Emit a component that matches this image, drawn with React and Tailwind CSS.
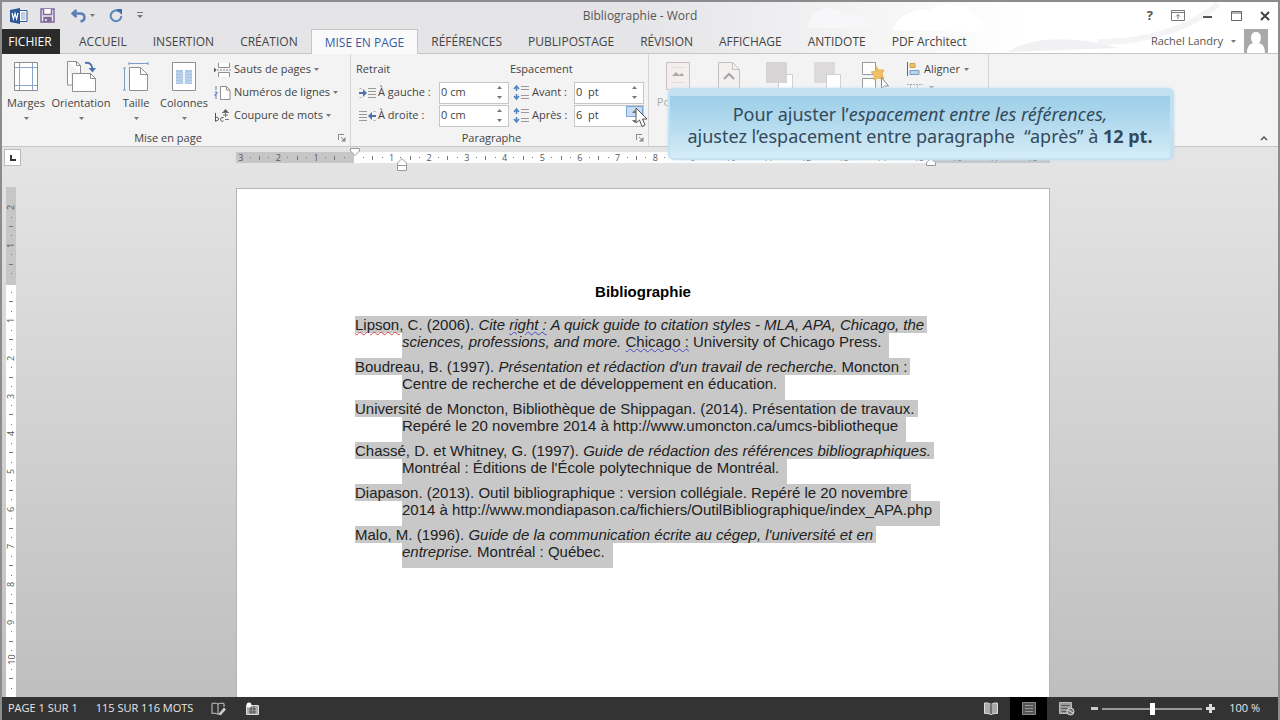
import React, { useState } from 'react';

const TABS = ['ACCUEIL', 'INSERTION', 'CRÉATION', 'MISE EN PAGE', 'RÉFÉRENCES', 'PUBLIPOSTAGE', 'RÉVISION', 'AFFICHAGE', 'ANTIDOTE', 'PDF Architect'];

// one quarter of a centimetre on the rulers
const QUARTER = 37.7 / 4;

const Caret = ({ className = '' }) => (
    <svg width="5" height="3" viewBox="0 0 5 3" className={`shrink-0 ${className}`}>
        <path d="M0 0h5L2.5 3z" fill="#777" />
    </svg>
);

const WordLogo = () => (
    <svg width="18" height="16" viewBox="0 0 18 16">
        <path d="M9 2.5h8v11H9z" fill="#fff" stroke="#2b579a" />
        <path d="M11 5h4.5M11 7h4.5M11 9h4.5M11 11h4.5" stroke="#7f9cc9" />
        <path d="M0 2l10-2v16L0 14z" fill="#2b579a" />
        <path d="M2 5l1.4 6L5 5.500l1.600 5.500L8 5" fill="none" stroke="#fff" strokeWidth="1.200" />
    </svg>
);

const SaveIcon = () => (
    <svg width="15" height="15" viewBox="0 0 15 15" fill="none" stroke="#80689a" strokeWidth="1.500">
        <path d="M1 1h13v13H1z" fill="#eeeaf4" />
        <path d="M3.500 1v5.500h8V1" fill="#fff" />
        <path d="M4 14v-4.500h7V14" fill="#80689a" />
        <path d="M6 11v2" stroke="#fff" />
    </svg>
);

const UndoIcon = () => (
    <svg width="15" height="14" viewBox="0 0 15 14" fill="none" stroke="#5b7db8" strokeWidth="2.500">
        <path d="M5.500 1L1.500 4.500l4 3.500M2 4.500h7c3 0 4.500 1.500 4.500 4S12 12 9.500 12.500" />
    </svg>
);

const RedoIcon = () => (
    <svg width="14" height="14" viewBox="0 0 14 14" fill="none" stroke="#5b86bd" strokeWidth="2">
        <path d="M10 2.500A5.300 5.300 0 1 0 12.300 7" />
        <path d="M7 0h6v6z" fill="#3f6cab" stroke="none" />
    </svg>
);

const MarginsIcon = () => (
    <svg width="24" height="29" viewBox="0 0 24 29" fill="none">
        <path d="M.5.500h23v28H.5z" fill="#fff" stroke="#8e8e8e" />
        <path d="M5.500 1v27M18.500 1v27M1 5.500h22M1 23.500h22" stroke="#8aa5c8" />
    </svg>
);

const OrientationIcon = () => (
    <svg width="31" height="31" viewBox="0 0 31 31" fill="none">
        <path d="M1.500.500h9l4 4V12M1.500.500V24H6" fill="#fff" stroke="#8e8e8e" />
        <path d="M10.500.500v4h4" stroke="#8e8e8e" />
        <path d="M6.500 12.500h18l5 5v13h-23z" fill="#fff" stroke="#8e8e8e" />
        <path d="M24.500 12.500v5h5" stroke="#8e8e8e" />
        <path d="M19 2c4-1 7 1 7.500 6" stroke="#4d73ad" strokeWidth="2" />
        <path d="M22.500 7h7.500l-3.500 4.500z" fill="#4d73ad" />
    </svg>
);

const SizeIcon = () => (
    <svg width="26" height="29" viewBox="0 0 26 29" fill="none">
        <path d="M6 1.500h19M6 0v3M25 0v3M1.500 6v22M0 6h3M0 28h3" stroke="#7d9cc6" />
        <path d="M6.500 5.500h11l7 7v16h-18z" fill="#fff" stroke="#8e8e8e" />
        <path d="M17.500 5.500v7h7" stroke="#8e8e8e" />
    </svg>
);

const ColumnsIcon = () => (
    <svg width="24" height="29" viewBox="0 0 24 29" fill="none">
        <path d="M.5.500h23v28H.5z" fill="#fff" stroke="#8e8e8e" />
        <path d="M4 8h7v14H4zM13 8h7v14h-7z" fill="#a9c6e6" />
        <path d="M4 11h16M4 14h16M4 17h16M4 20h16" stroke="#c8dcf1" />
    </svg>
);

const BreaksIcon = () => (
    <svg width="17" height="14" viewBox="0 0 17 14" fill="none" stroke="#8e8e8e">
        <path d="M4.500 0v4.500h11V0M4.500 14V9.500h11V14" fill="#fff" />
        <path d="M3 7h14" strokeDasharray="2 1" />
        <path d="M0 4.500L2.500 7 0 9.500z" fill="#555" stroke="none" />
    </svg>
);

const LineNumbersIcon = () => (
    <svg width="17" height="14" viewBox="0 0 17 14" fill="none" stroke="#8e8e8e">
        <path d="M6.500.500h6l3.500 3.500v9.500H6.500z" fill="#fff" />
        <path d="M12.500.500V4H16" />
        <path d="M2 0v4M1 6h2v2H1v2h2M1 12h2" stroke="#5b7db8" />
    </svg>
);

const HyphenIcon = () => (
    <svg width="17" height="14" viewBox="0 0 17 14" fill="none" stroke="#555">
        <path d="M1.500 4v8.500M1.500 8.500c4-1.500 4 4 0 3.500M9.500 8.500c-4-1-4 5 0 3.500" />
        <path d="M11 10.500h4M11.500 1v7M8 3.500h7M9 6h5" stroke="#777" />
        <path d="M11.500 0l2.500 3h-5z" fill="#555" stroke="none" />
    </svg>
);

const IndentIcon = ({ right }) => (
    <svg width="17" height="14" viewBox="0 0 17 14" fill="none" className={right ? '-scale-x-100' : ''}>
        <path d="M9 2.500h8M9 5.500h8M9 8.500h8M9 11.500h8" stroke="#999" />
        <path d="M0 7h7" stroke="#4d73ad" strokeWidth="2" />
        <path d="M4 3l4 4-4 4z" fill="#4d73ad" />
        <path d="M.5 2.500h2M.5 11.500h2" stroke="#aaa" />
    </svg>
);

const SpacingIcon = () => (
    <svg width="17" height="17" viewBox="0 0 17 17" fill="none">
        <path d="M8 2.500h8M8 5.500h8M8 11.500h8M8 14.500h8" stroke="#999" />
        <path d="M3.500 2v5M3.500 10v5M1 5l2.500-3L6 5M1 12l2.500 3L6 12" stroke="#4d84b8" strokeWidth="1.500" />
    </svg>
);

const Launcher = () => (
    <svg width="8" height="8" viewBox="0 0 8 8" fill="none" stroke="#888">
        <path d="M.5 6V.500H6M3 3l3 3" />
        <path d="M7.500 3v4.500H3z" fill="#888" stroke="none" />
    </svg>
);

function BigButton({ icon, label, className }) {
    return (
        <button className={`flex flex-col items-center whitespace-nowrap ${className}`}>
            <span className="flex h-9 items-center justify-center">{icon}</span>
            <span className="mt-px leading-4">{label}</span>
            <Caret className="mt-[6px]" />
        </button>
    );
}

function SmallButton({ icon, label }) {
    return (
        <button className="flex h-[23px] items-center gap-[3px] whitespace-nowrap">
            {icon}
            <span>{label}</span>
            <Caret />
        </button>
    );
}

function Spinner({ id, icon, label, value, onChange, hot, labelClass }) {
    return (
        <div className="flex h-[23px] items-center">
            <span className="mr-[2px]">{icon}</span>
            <label htmlFor={id} className={`whitespace-nowrap ${labelClass}`}>{label}</label>
            <div className="flex h-[22px] w-[70px] border border-[#c6c6c6] bg-white">
                <input
                    id={id}
                    value={value}
                    onChange={(e) => onChange(e.target.value)}
                    className="w-0 flex-1 bg-transparent pl-px whitespace-pre outline-none"
                />
                <div className="flex w-[17px] flex-col">
                    <button aria-label="Augmenter" className={`flex flex-1 items-center justify-center ${hot ? 'border border-[#7da7d6] bg-[#c5dcf3]' : ''}`}>
                        <Caret className="rotate-180" />
                    </button>
                    <button aria-label="Diminuer" className="flex flex-1 items-center justify-center">
                        <Caret />
                    </button>
                </div>
            </div>
        </div>
    );
}

function GroupLabel({ children }) {
    return (
        <div className="relative flex h-4 items-center justify-center pr-4">
            <span>{children}</span>
            <button aria-label="Options" className="absolute right-1 bottom-1">
                <Launcher />
            </button>
        </div>
    );
}

function TitleBar() {
    return (
        <div className="relative flex h-[27px] items-center justify-between pr-2 pl-2">
            <div className="flex items-center">
                <WordLogo />
                <button aria-label="Enregistrer" className="ml-3"><SaveIcon /></button>
                <button aria-label="Annuler" className="ml-4 flex items-center gap-1"><UndoIcon /><Caret /></button>
                <button aria-label="Rétablir" className="ml-[14px]"><RedoIcon /></button>
                <button aria-label="Personnaliser" className="ml-[14px]">
                    <svg width="6" height="7" viewBox="0 0 6 7"><path d="M0 0h6v1H0zM0 3h6L3 6z" fill="#777" /></svg>
                </button>
            </div>
            <h1 className="absolute left-1/2 -translate-x-1/2 text-[12px] text-[#555]">Bibliographie - Word</h1>
            <div className="flex items-center gap-[18px] text-[#555]">
                <button aria-label="Aide" className="text-[13px] font-bold">?</button>
                <button aria-label="Options d'affichage du ruban">
                    <svg width="14" height="11" viewBox="0 0 14 11" fill="none" stroke="#777">
                        <path d="M.5.500h13v10H.5zM.5 2.500h13M7 9V4.500M5 6.500l2-2 2 2" />
                    </svg>
                </button>
                <button aria-label="Réduire">
                    <svg width="10" height="11" viewBox="0 0 10 11"><path d="M0 6h9v2H0z" fill="#555" /></svg>
                </button>
                <button aria-label="Agrandir">
                    <svg width="11" height="10" viewBox="0 0 11 10" fill="none" stroke="#666"><path d="M.5.500h10v9H.5zM.5 2h10" /></svg>
                </button>
                <button aria-label="Fermer">
                    <svg width="10" height="10" viewBox="0 0 10 10" stroke="#444" strokeWidth="2"><path d="M1 1l8 8M9 1L1 9" /></svg>
                </button>
            </div>
        </div>
    );
}

function TabBar({ active, onSelect }) {
    return (
        <div className="relative flex h-[25px] items-stretch text-[12px]">
            <button className="-ml-[2px] w-[60px] bg-[#2b2b2b] text-white">FICHIER</button>
            <div className="flex flex-1 border-b border-[#c6c6c6] pl-[6px]">
                {TABS.map(tab => (
                    <button
                        key={tab}
                        onClick={() => onSelect(tab)}
                        className={`px-[13px] pt-px whitespace-nowrap ${tab === active
                            ? '-mb-px border border-b-0 border-[#c6c6c6] bg-[#fafafa] text-[#3a5ba8]'
                            : 'text-[#444]'}`}
                    >
                        {tab}
                    </button>
                ))}
                <button className="mr-[10px] ml-auto flex items-center gap-2 text-[11px] text-[#555]">
                    Rachel Landry <Caret />
                    <svg width="24" height="24" viewBox="0 0 24 24">
                        <path d="M0 0h24v24H0z" fill="#a9a9a9" />
                        <path d="M3 24c0-7 3-9 6-10-3-3-3-11 3-11s6 8 3 11c3 1 6 3 6 10z" fill="#fff" />
                    </svg>
                </button>
            </div>
        </div>
    );
}

function Ribbon() {
    const [values, setValues] = useState({ left: '0 cm', right: '0 cm', before: '0  pt', after: '6  pt' });
    const set = (key) => (value) => setValues({ ...values, [key]: value });

    return (
        <div className="flex h-[93px] border-b border-[#c6c6c6] bg-[#f3f3f3] text-[11px] text-[#444]">
            {/* Mise en page */}
            <section className="flex w-[349px] shrink-0 flex-col justify-between border-r border-[#d5d5d5] pt-1">
                <div className="flex">
                    <BigButton icon={<MarginsIcon />} label="Marges" className="w-12" />
                    <BigButton icon={<OrientationIcon />} label="Orientation" className="w-[62px]" />
                    <BigButton icon={<SizeIcon />} label="Taille" className="w-12" />
                    <BigButton icon={<ColumnsIcon />} label="Colonnes" className="w-12" />
                    <div className="ml-[6px] flex flex-col">
                        <SmallButton icon={<BreaksIcon />} label="Sauts de pages" />
                        <SmallButton icon={<LineNumbersIcon />} label="Numéros de lignes" />
                        <SmallButton icon={<HyphenIcon />} label="Coupure de mots" />
                    </div>
                </div>
                <GroupLabel>Mise en page</GroupLabel>
            </section>

            {/* Paragraphe */}
            <section className="flex w-[298px] shrink-0 flex-col justify-between border-r border-[#d5d5d5] pt-1">
                <div className="flex pl-[5px]">
                    <div className="w-[154px]">
                        <h2 className="h-[23px] leading-[22px]">Retrait</h2>
                        <div className="pl-[3px]">
                            <Spinner id="indent-left" icon={<IndentIcon />} label="À gauche :" labelClass="w-[61px]" value={values.left} onChange={set('left')} />
                            <Spinner id="indent-right" icon={<IndentIcon right />} label="À droite :" labelClass="w-[61px]" value={values.right} onChange={set('right')} />
                        </div>
                    </div>
                    <div>
                        <h2 className="h-[23px] leading-[22px]">Espacement</h2>
                        <div className="pl-[3px]">
                            <Spinner id="space-before" icon={<SpacingIcon />} label="Avant :" labelClass="w-[42px]" value={values.before} onChange={set('before')} />
                            <Spinner id="space-after" icon={<SpacingIcon />} label="Après :" labelClass="w-[42px]" value={values.after} onChange={set('after')} hot />
                        </div>
                    </div>
                </div>
                <GroupLabel>Paragraphe</GroupLabel>
            </section>

            {/* Organiser, mostly behind the caption */}
            <section className="flex w-[340px] shrink-0 items-start border-r border-[#d5d5d5] pt-2 pl-[3px] text-[#aaa]">
                <button className="flex w-[51px] flex-col items-center">
                    <svg width="24" height="28" viewBox="0 0 24 28" fill="none" stroke="#cdbfc2">
                        <path d="M.5.500h23v27H.5z" fill="#f4eeee" />
                        <path d="M5 5.500h14M5 20.500h14" stroke="#ddd" />
                        <path d="M6 14l4-4 3 3 3-2 2 3z" fill="#b5a5aa" stroke="none" />
                    </svg>
                    <span className="mt-1">Position</span>
                </button>
                <div className="flex w-[51px] justify-center">
                    <svg width="24" height="28" viewBox="0 0 24 28" fill="none" stroke="#c5c0c2">
                        <path d="M1.500.500h14l7 7v20h-21zM15.500.500v7h7" fill="#f4f0f0" />
                        <path d="M7 17l5-5 5 5" stroke="#a9a2a5" strokeWidth="2" />
                    </svg>
                </div>
                <div className="flex w-[51px] justify-center">
                    <svg width="27" height="28" viewBox="0 0 27 28" fill="none" stroke="#cfcfcf">
                        <path d="M12.500 12.500h14v15h-14z" fill="#fff" />
                        <path d="M0 0h21v21H0z" fill="#d6d4d4" stroke="none" />
                    </svg>
                </div>
                <div className="flex w-[45px] justify-center">
                    <svg width="27" height="28" viewBox="0 0 27 28" fill="none" stroke="#cfcfcf">
                        <path d="M0 0h21v21H0z" fill="#dcdada" stroke="none" />
                        <path d="M12.500 12.500h14v15h-14z" fill="#fff" />
                    </svg>
                </div>
                <div className="flex w-[51px] justify-center">
                    <svg width="28" height="28" viewBox="0 0 28 28" fill="none" stroke="#9a9a9a">
                        <path d="M.5.500h13v12H.5zM.5 16.500h13v11H.5z" fill="#fff" />
                        <path d="M14 4l2.500 4H22l-2 4 2 5-6-1-4 2v-5l-3-3 5-1z" fill="#f0c068" stroke="#e5b355" />
                        <path d="M19.500 15.500v11l3-2.500h4z" fill="#fff" stroke="#888" />
                    </svg>
                </div>
                <div className="flex flex-col gap-2 pl-[6px]">
                    <button className="flex items-center gap-1 leading-[14px] text-[#444]">
                        <svg width="13" height="14" viewBox="0 0 13 14" fill="none">
                            <path d="M.5 0v14" stroke="#666" />
                            <path d="M3 1.500h5v4H3z" fill="#e7c46c" stroke="#c9a24a" />
                            <path d="M3 8.500h9v4H3z" fill="#bcd3ec" stroke="#7b9cc2" />
                        </svg>
                        Aligner <Caret />
                    </button>
                    <svg width="30" height="8" viewBox="0 0 30 8" fill="none" stroke="#aaa">
                        <path d="M0 .500h16M0 6.500h16M3.500 0v7M10.500 0v7" strokeDasharray="2 1" />
                        <path d="M22 2h5l-2.500 3z" fill="#aaa" stroke="none" />
                    </svg>
                </div>
            </section>

            <button aria-label="Réduire le ruban" className="mr-[10px] mb-[5px] ml-auto self-end">
                <svg width="8" height="6" viewBox="0 0 8 6" fill="none" stroke="#555" strokeWidth="1.500"><path d="M1 5l3-3 3 3" /></svg>
            </button>
        </div>
    );
}

function Tick({ index, origin, vertical }) {
    const step = index - origin;
    const cm = Math.abs(step) / 4;
    const style = vertical ? { height: QUARTER } : { width: QUARTER };

    return (
        <span style={style} className="flex shrink-0 items-center justify-center">
            {step !== 0 && step % 4 === 0 && <span className={vertical ? '-rotate-90' : ''}>{cm}</span>}
            {step % 4 !== 0 && step % 2 === 0 && <i className={vertical ? 'h-px w-1 bg-[#777]' : 'h-1 w-px bg-[#777]'} />}
            {step % 2 !== 0 && <i className="size-px bg-[#777]" />}
        </span>
    );
}

function HorizontalRuler() {
    return (
        <div className="flex h-[21px] items-start pt-[2px]">
            <button aria-label="Tabulation" className="ml-[2px] flex size-[17px] shrink-0 items-center justify-center border border-[#bbb] bg-white">
                <svg width="6" height="6" viewBox="0 0 6 6"><path d="M1 0v5h5" fill="none" stroke="#333" strokeWidth="2" /></svg>
            </button>
            <div className="-ml-[5px] flex flex-1 justify-center pt-[3px] pr-2">
                <div className="relative flex h-[11px] w-[814px] bg-[linear-gradient(90deg,#c6c6c6_118px,#fff_118px,#fff_694px,#c6c6c6_694px)] text-[9px] leading-[11px] text-[#555]">
                    {Array.from({ length: 86 }, (_, i) => <Tick key={i} index={i} origin={12} />)}
                    <svg width="10" height="8" viewBox="0 0 10 8" className="absolute -top-1 left-[114px]">
                        <path d="M.5.500h9V3L5 7.500.500 3z" fill="#fff" stroke="#999" />
                    </svg>
                    <svg width="10" height="13" viewBox="0 0 10 13" className="absolute top-[6px] left-[161px]">
                        <path d="M.5 5L5 .500 9.500 5v7.500h-9zM.5 7.500h9" fill="#fff" stroke="#999" />
                    </svg>
                    <svg width="10" height="8" viewBox="0 0 10 8" className="absolute top-[6px] left-[690px]">
                        <path d="M.5 4.500L5 .500l4.500 4v3h-9z" fill="#fff" stroke="#999" />
                    </svg>
                </div>
            </div>
        </div>
    );
}

function Reference({ first, second }) {
    return (
        <p className="leading-[17px] whitespace-nowrap">
            <span className="block w-max bg-[#c8c8c8] pr-[3px]">{first}</span>
            <span className="ml-[47px] block w-max bg-[#c8c8c8] pr-2 pb-2">{second}</span>
        </p>
    );
}

function Page() {
    const grammar = 'underline decoration-[#4646c8] decoration-wavy decoration-1';

    return (
        <article className="w-[814px] border border-b-0 border-[#b5b5b5] bg-white px-[118px] pt-[93px] font-['Liberation_Sans',sans-serif] text-[15px] text-[#222]">
            <h2 className="text-center leading-[20px] font-bold text-black">Bibliographie</h2>
            <div className="mt-[14px]">
                <Reference
                    first={<><span className="underline decoration-[#d84848] decoration-wavy decoration-1">Lipson,</span> C. (2006). <i>Cite <span className={grammar}>right :</span> A quick guide to citation styles - MLA, APA, Chicago, the</i></>}
                    second={<><i>sciences, professions, and more.</i> <span className={grammar}>Chicago :</span> University of Chicago Press.</>}
                />
                <Reference
                    first={<>Boudreau, B. (1997). <i>Présentation et rédaction d'un travail de recherche.</i> Moncton :</>}
                    second="Centre de recherche et de développement en éducation."
                />
                <Reference
                    first="Université de Moncton, Bibliothèque de Shippagan. (2014). Présentation de travaux."
                    second="Repéré le 20 novembre 2014 à http://www.umoncton.ca/umcs-bibliotheque"
                />
                <Reference
                    first={<>Chassé, D. et Whitney, G. (1997). <i>Guide de rédaction des références bibliographiques.</i></>}
                    second="Montréal : Éditions de l'École polytechnique de Montréal."
                />
                <Reference
                    first="Diapason. (2013). Outil bibliographique : version collégiale. Repéré le 20 novembre"
                    second="2014 à http://www.mondiapason.ca/fichiers/OutilBibliographique/index_APA.php"
                />
                <Reference
                    first={<>Malo, M. (1996). <i>Guide de la communication écrite au cégep, l'université et en</i></>}
                    second={<><i>entreprise.</i> Montréal : Québec.</>}
                />
            </div>
        </article>
    );
}

function StatusBar() {
    const [zoom, setZoom] = useState(50);

    return (
        <footer className="-mx-[2px] flex h-[23px] shrink-0 items-center bg-[#333] pl-2 text-[11px] text-[#e6e6e6]">
            <span>PAGE 1 SUR 1</span>
            <span className="ml-[18px]">115 SUR 116 MOTS</span>
            <button aria-label="Vérification" className="ml-[18px]">
                <svg width="15" height="14" viewBox="0 0 15 14" fill="none" stroke="#ccc">
                    <path d="M7 2C5 1 3 1 1 1.500v10c2-.5 4-.5 6 1 1-1 2-1.300 3-1.400M7 2c2-1 4-1 6-.5V5M7 2v10" />
                    <path d="M8 12l5-6 1.500 1.500L9.500 13z" fill="#ccc" />
                </svg>
            </button>
            <button aria-label="Macro" className="ml-5">
                <svg width="13" height="13" viewBox="0 0 13 13" fill="none">
                    <path d="M.5 3.500h12v9H.5z" fill="#aaa" stroke="#ddd" />
                    <path d="M3 7h7M3 10h7M5 4v8M8 4v8" stroke="#555" />
                    <circle cx="3" cy="3" r="2.500" fill="#fff" />
                </svg>
            </button>
            <div className="ml-auto flex h-full items-center">
                <button aria-label="Mode lecture" className="mr-3">
                    <svg width="14" height="13" viewBox="0 0 14 13" fill="none" stroke="#ddd">
                        <path d="M7 2.500C5 1 3 .800.500 1v10.500c2.500 0 4.500 0 6.500 1 2-1 4-1 6.500-1V1C11 .800 9 1 7 2.500z" fill="#aaa" />
                        <path d="M7 2v10" stroke="#333" />
                    </svg>
                </button>
                <button aria-label="Mode Page" className="flex h-full w-[37px] items-center justify-center bg-black">
                    <svg width="14" height="13" viewBox="0 0 14 13" fill="none">
                        <path d="M.5.500h13v12H.5z" fill="#555" stroke="#888" />
                        <path d="M3 3.500h8M3 6.500h8M3 9.500h8" stroke="#999" />
                    </svg>
                </button>
                <button aria-label="Mode Web" className="ml-3">
                    <svg width="16" height="14" viewBox="0 0 16 14" fill="none">
                        <path d="M.5.500h12v11H.5z" fill="#999" stroke="#bbb" />
                        <path d="M2.500 3.500h8M2.500 6.500h6M2.500 9.500h5" stroke="#555" />
                        <circle cx="11.500" cy="9.500" r="3.500" fill="#777" stroke="#ddd" />
                        <path d="M9 8l5 3" stroke="#ddd" />
                    </svg>
                </button>
                <button aria-label="Zoom arrière" className="ml-4"><svg width="7" height="3" viewBox="0 0 7 3"><path d="M0 0h7v3H0z" fill="#ccc" /></svg></button>
                <input
                    type="range"
                    aria-label="Zoom"
                    value={zoom}
                    onChange={(e) => setZoom(e.target.value)}
                    className="mx-1 h-3 w-[100px] appearance-none bg-[linear-gradient(#999,#999)] bg-[length:100%_2px] bg-center bg-no-repeat [&::-webkit-slider-thumb]:h-3 [&::-webkit-slider-thumb]:w-[5px] [&::-webkit-slider-thumb]:appearance-none [&::-webkit-slider-thumb]:bg-white"
                />
                <button aria-label="Zoom avant"><svg width="9" height="9" viewBox="0 0 9 9"><path d="M3 0h3v3h3v3H6v3H3V6H0V3h3z" fill="#ddd" /></svg></button>
                <span className="mr-5 ml-[14px]">100 %</span>
            </div>
        </footer>
    );
}

function Caption() {
    return (
        <div className="absolute top-[86px] left-[666px] w-[506px] rounded-md border-t-8 border-r-4 border-b-2 border-l-2 border-[#c3e1f0] bg-[linear-gradient(#9ccfe8,#b3daee_45%,#d6edf8)] px-2 pt-[7px] pb-[11px] text-center font-['Noto_Sans',sans-serif] text-[18px] leading-[22px] whitespace-nowrap text-[#34495a] shadow-[0_0_3px_#c3e1f0]">
            <p>Pour ajuster l’<i>espacement entre les références,</i></p>
            <p>ajustez l’espacement entre paragraphe&nbsp; “après” à <b>12 pt.</b></p>
        </div>
    );
}

export default function App() {
    const [activeTab, setActiveTab] = useState('MISE EN PAGE');

    return (
        <div className="relative flex h-screen flex-col overflow-hidden border-x-2 border-t-2 border-[#8c8c8e] bg-[linear-gradient(#e4e4e4_160px,#bdbdbd)] font-['Open_Sans',sans-serif]">
            <header className="relative bg-[linear-gradient(90deg,#e5e5e8_50%,#fff_80%)]">
                <svg className="absolute top-0 right-0" width="480" height="52" viewBox="0 0 480 52" fill="none">
                    <path d="M10 26C12 4 34 2 46 12c14 0 24 4 26 14z" fill="#f7f7f9" />
                    <path d="M95 28c4-14 20-22 36-20 14-10 40-8 46 6 10 2 12 12 6 16z" fill="#fff" />
                    <path d="M210 50c20-14 60-18 110-4z" fill="#f1f1f4" />
                    <path d="M300 40c60 0 100-20 120-38" stroke="#f4f4f6" strokeWidth="6" />
                </svg>
                <TitleBar />
                <TabBar active={activeTab} onSelect={setActiveTab} />
            </header>
            <Ribbon />
            <HorizontalRuler />
            <main className="flex min-h-0 flex-1 overflow-hidden">
                <div className="ml-1 flex w-[10px] shrink-0 flex-col self-stretch pt-[19px]">
                    <div className="flex flex-1 flex-col bg-[linear-gradient(#c6c6c6_98px,#fff_98px)] pt-4 text-[9px] leading-[9px] text-[#555]">
                        {Array.from({ length: 52 }, (_, i) => <Tick key={i} index={i} origin={8} vertical />)}
                    </div>
                </div>
                <div className="flex flex-1 items-stretch justify-center pt-5 pr-2">
                    <Page />
                </div>
            </main>
            <StatusBar />

            <Caption />
            <svg width="14" height="21" viewBox="0 0 14 21" className="absolute top-[105px] left-[633px]">
                <path d="M1 1v15l3.500-3 2.500 6.500 3-1.500L7.500 12H12z" fill="#fff" stroke="#555" />
            </svg>
        </div>
    );
}
